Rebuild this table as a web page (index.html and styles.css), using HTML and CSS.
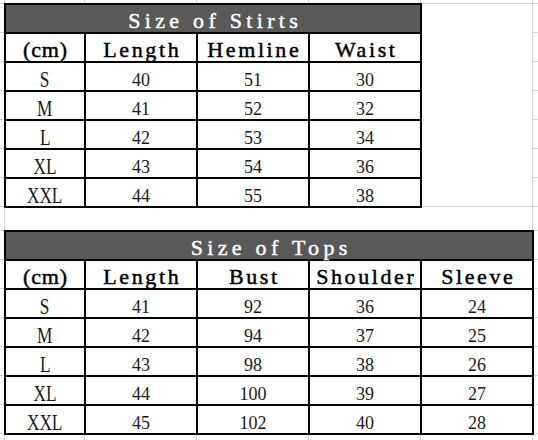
FILE: index.html
```html
<!DOCTYPE html>
<html lang="en">
<head>
<meta charset="utf-8">
<title>Size charts</title>
<link rel="stylesheet" href="styles.css">
</head>
<body>
<div class="sheet">
  <div class="upper">
    <div class="size-table cols-4">
      <div class="cell title"><span class="spaced">Size of Stirts</span></div>
      <div class="cell head unit"><span class="spaced">(cm)</span></div>
      <div class="cell head"><span class="spaced">Length</span></div>
      <div class="cell head"><span class="spaced">Hemline</span></div>
      <div class="cell head"><span class="spaced">Waist</span></div>

      <div class="cell size"><span class="narrow">S</span></div>
      <div class="cell num">40</div><div class="cell num">51</div><div class="cell num">30</div>
      <div class="cell size"><span class="narrow">M</span></div>
      <div class="cell num">41</div><div class="cell num">52</div><div class="cell num">32</div>
      <div class="cell size"><span class="narrow">L</span></div>
      <div class="cell num">42</div><div class="cell num">53</div><div class="cell num">34</div>
      <div class="cell size"><span class="narrow">XL</span></div>
      <div class="cell num">43</div><div class="cell num">54</div><div class="cell num">36</div>
      <div class="cell size"><span class="narrow">XXL</span></div>
      <div class="cell num">44</div><div class="cell num">55</div><div class="cell num">38</div>
    </div>
    <div class="blank"></div>
  </div>
  <div class="gap"></div>
  <div class="size-table cols-5">
    <div class="cell title"><span class="spaced">Size of Tops</span></div>
    <div class="cell head unit"><span class="spaced">(cm)</span></div>
    <div class="cell head"><span class="spaced">Length</span></div>
    <div class="cell head"><span class="spaced">Bust</span></div>
    <div class="cell head"><span class="spaced">Shoulder</span></div>
    <div class="cell head"><span class="spaced">Sleeve</span></div>

    <div class="cell size"><span class="narrow">S</span></div>
    <div class="cell num">41</div><div class="cell num">92</div><div class="cell num">36</div><div class="cell num">24</div>
    <div class="cell size"><span class="narrow">M</span></div>
    <div class="cell num">42</div><div class="cell num">94</div><div class="cell num">37</div><div class="cell num">25</div>
    <div class="cell size"><span class="narrow">L</span></div>
    <div class="cell num">43</div><div class="cell num">98</div><div class="cell num">38</div><div class="cell num">26</div>
    <div class="cell size"><span class="narrow">XL</span></div>
    <div class="cell num">44</div><div class="cell num">100</div><div class="cell num">39</div><div class="cell num">27</div>
    <div class="cell size"><span class="narrow">XXL</span></div>
    <div class="cell num">45</div><div class="cell num">102</div><div class="cell num">40</div><div class="cell num">28</div>
  </div>
</div>
</body>
</html>
```
FILE: styles.css
```css
html, body {
  margin: 0;
  padding: 0;
}

body {
  width: 538px;
  height: 440px;
  overflow: hidden;
  font-family: "Liberation Serif", "Times New Roman", serif;
  color: #111;
  background:
    linear-gradient(#d4d4d4, #d4d4d4) 4px 0 / 1px 100% no-repeat,
    linear-gradient(#d4d4d4, #d4d4d4) 84px 0 / 1px 100% no-repeat,
    linear-gradient(#d4d4d4, #d4d4d4) 196px 0 / 1px 100% no-repeat,
    linear-gradient(#d4d4d4, #d4d4d4) 308px 0 / 1px 100% no-repeat,
    linear-gradient(#d4d4d4, #d4d4d4) 420px 0 / 1px 100% no-repeat,
    linear-gradient(#d4d4d4, #d4d4d4) 532px 0 / 1px 100% no-repeat,
    repeating-linear-gradient(to bottom, #d4d4d4 0 1px, transparent 1px 29px) 0 3px / 100% 205px no-repeat,
    repeating-linear-gradient(to bottom, #d4d4d4 0 1px, transparent 1px 29px) 0 230px / 100% 206px no-repeat,
    #ffffff;
}

.sheet {
  padding: 3px 0 0 4px;
}

.upper {
  display: flex;
  align-items: stretch;
}

.blank {
  width: 110px;
  margin: 1px 0 2px 0;
  background: #ffffff;
}

.gap {
  width: 527px;
  height: 22px;
  margin-left: 1px;
  background: #ffffff;
}

.size-table {
  display: grid;
  grid-auto-rows: 27px;
  gap: 2px;
  padding: 2px;
  background: #000;
  width: fit-content;
}

.cols-4 {
  grid-template-columns: 78px repeat(3, 110px);
}

.cols-5 {
  grid-template-columns: 78px repeat(4, 110px);
}

.cell {
  display: flex;
  align-items: center;
  justify-content: center;
  padding-top: 5px;
  box-sizing: border-box;
  background: #ffffff;
  white-space: nowrap;
  line-height: 1;
}

.title {
  grid-column: 1 / -1;
  background: #595959;
  color: #ffffff;
  font-size: 22px;
  --ls: 4.3px;
}

.head {
  font-size: 22px;
  color: #000;
  --ls: 2.6px;
}

.head.unit {
  --ls: 0.8px;
}

.spaced {
  display: inline-block;
  letter-spacing: var(--ls);
  padding-left: var(--ls);
  -webkit-text-stroke: 0.45px currentColor;
}

.size {
  font-size: 24px;
  color: #1a1a1a;
}

.narrow {
  display: inline-block;
  transform: scaleX(0.72);
}

.num {
  font-size: 18px;
  padding-top: 7px;
  color: #1a1a1a;
}
```
